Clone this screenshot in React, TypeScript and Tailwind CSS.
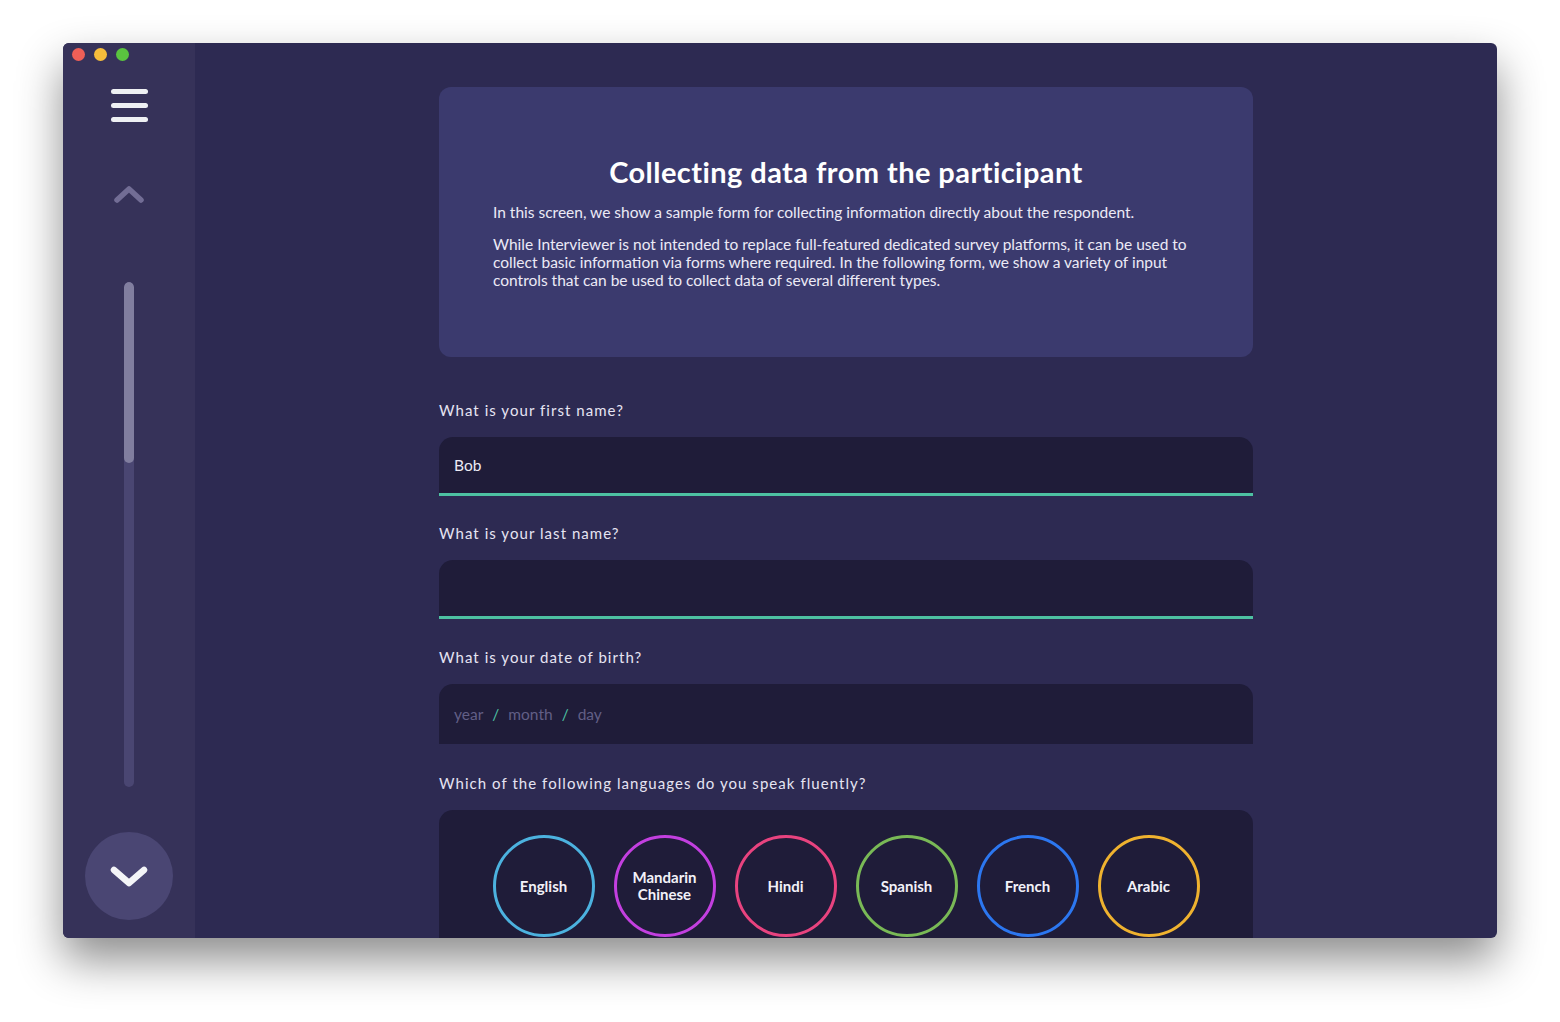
import React from 'react';

const languages = [
  { name: 'English', ring: 'border-[#4cb2df]' },
  { name: 'Mandarin Chinese', ring: 'border-[#c33fe0]' },
  { name: 'Hindi', ring: 'border-[#e8437f]' },
  { name: 'Spanish', ring: 'border-[#79b956]' },
  { name: 'French', ring: 'border-[#2c77f0]' },
  { name: 'Arabic', ring: 'border-[#efb22f]' },
];

function Label({ children }: { children: React.ReactNode }) {
  return <div className="text-[15px] leading-[18px] tracking-[0.07em] text-[#e6e4f2] mb-[18px]">{children}</div>;
}

function TextField({ value }: { value?: string }) {
  return (
    <div className="h-[59px] rounded-t-[14px] bg-[#1f1c39] border-b-[3px] border-[#4dc1a2] flex items-center px-[15px] pt-[1px] text-[15.5px] text-[#ecebf5]">
      {value}
    </div>
  );
}

export default function App() {
  return (
    <div className="w-[1560px] h-[1022px] bg-white pl-[63px] pt-[43px]" style={{ fontFamily: 'Lato, "Noto Sans", sans-serif' }}>
      <div className="w-[1434px] h-[895px] rounded-[6px] overflow-hidden flex bg-[#2d2a52] shadow-[0_22px_45px_rgba(0,0,0,0.45)] relative">
        {/* traffic lights */}
        <div className="absolute left-[9px] top-[5px] flex gap-[9px]">
          <span className="w-[13px] h-[13px] rounded-full bg-[#ee5f57]" />
          <span className="w-[13px] h-[13px] rounded-full bg-[#f6bd3b]" />
          <span className="w-[13px] h-[13px] rounded-full bg-[#5ac43f]" />
        </div>

        {/* sidebar */}
        <aside className="w-[132px] shrink-0 bg-[#363259] flex flex-col items-center pt-[46px]">
          <div className="flex flex-col gap-[9px]">
            <span className="w-[37px] h-[5px] rounded-full bg-[#eef0f3]" />
            <span className="w-[37px] h-[5px] rounded-full bg-[#eef0f3]" />
            <span className="w-[37px] h-[5px] rounded-full bg-[#eef0f3]" />
          </div>
          <svg className="mt-[62px]" width="32" height="20" viewBox="0 0 32 20" fill="none">
            <path d="M4 16 L16 5 L28 16" stroke="#726d95" strokeWidth="5.5" strokeLinecap="round" strokeLinejoin="round" />
          </svg>
          <div className="mt-[78px] w-[10px] h-[505px] rounded-full bg-[#4a4672] overflow-hidden">
            <div className="h-[181px] rounded-full bg-[#817e9f]" />
          </div>
          <button className="mt-[45px] w-[88px] h-[88px] rounded-full bg-[#4a4673] flex items-center justify-center">
            <svg width="40" height="28" viewBox="0 0 40 28" fill="none">
              <path d="M5 8 L20 21 L35 8" stroke="#f4f5f8" strokeWidth="6.5" strokeLinecap="round" strokeLinejoin="round" />
            </svg>
          </button>
        </aside>

        {/* main */}
        <main className="flex-1 flex justify-center pt-[44px]">
          <div className="w-[814px]">
            <section className="h-[270px] rounded-[12px] bg-[#3b3a6e] px-[54px] pt-[67px] text-[#eceaf6]">
              <h1 className="text-center text-[29px] leading-[36px] font-bold text-white tracking-[0.015em]">
                Collecting data from the participant
              </h1>
              <p className="mt-[13px] text-[15.5px] leading-[18px]">
                In this screen, we show a sample form for collecting information directly about the respondent.
              </p>
              <p className="mt-[14px] text-[15.5px] leading-[18px]">
                While Interviewer is not intended to replace full-featured dedicated survey platforms, it can be used to collect basic information via forms where required. In the following form, we show a variety of input controls that can be used to collect data of several different types.
              </p>
            </section>

            <div className="mt-[44px]">
              <Label>What is your first name?</Label>
              <TextField value="Bob" />
            </div>

            <div className="mt-[28px]">
              <Label>What is your last name?</Label>
              <div className="mt-[1px]">
                <TextField />
              </div>
            </div>

            <div className="mt-[29px]">
              <Label>What is your date of birth?</Label>
              <div className="mt-[1px] h-[60px] rounded-t-[14px] bg-[#1f1c39] flex items-center px-[15px] pt-[2px] text-[15.5px] text-[#625f86] gap-[9px]">
                <span>year</span>
                <span className="text-[#4dc1a2]">/</span>
                <span>month</span>
                <span className="text-[#4dc1a2]">/</span>
                <span>day</span>
              </div>
            </div>

            <div className="mt-[30px]">
              <Label>Which of the following languages do you speak fluently?</Label>
              <div className="h-[160px] rounded-t-[14px] bg-[#1f1c39] pt-[25px] flex justify-center gap-[19px]">
                {languages.map(l => (
                  <div
                    key={l.name}
                    className={`w-[102px] h-[102px] rounded-full border-[3px] ${l.ring} flex items-center justify-center text-center px-[14px] text-[15px] leading-[17px] font-bold text-[#f2f1f8]`}
                  >
                    {l.name}
                  </div>
                ))}
              </div>
            </div>
          </div>
        </main>
      </div>
    </div>
  );
}
